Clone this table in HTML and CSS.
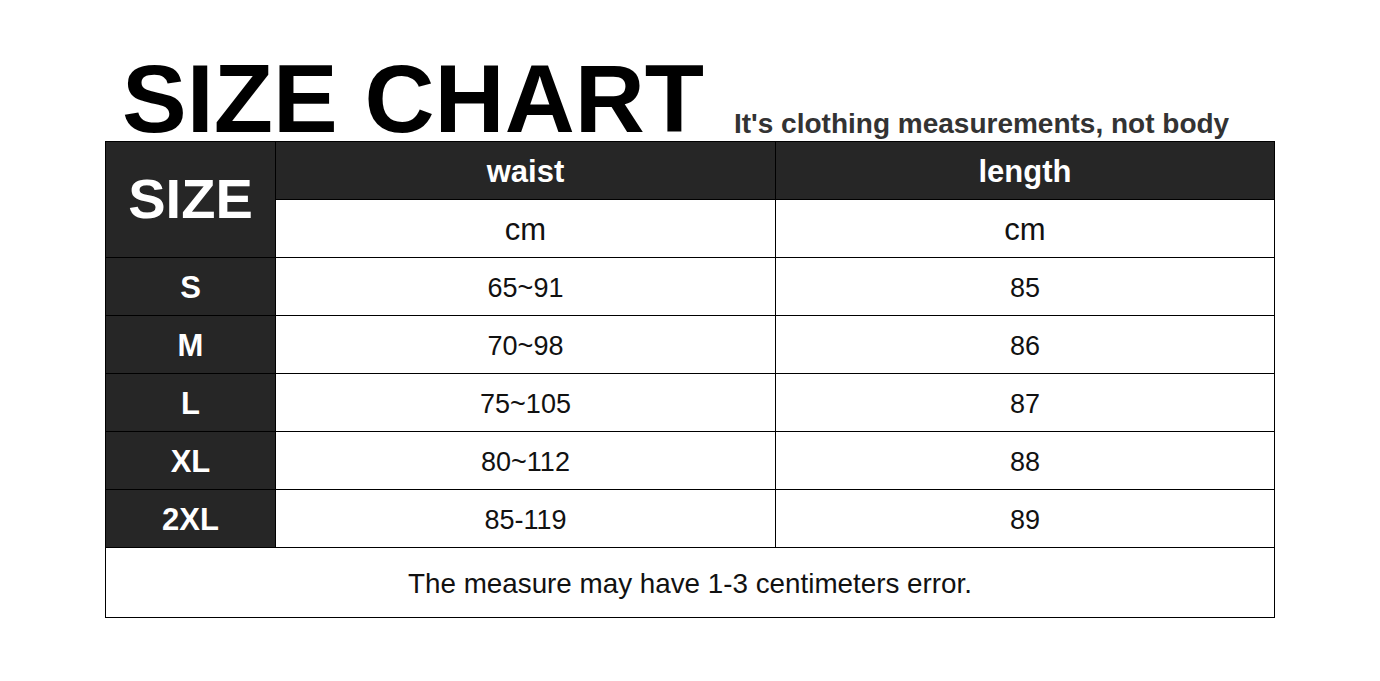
FILE: index.html
```html
<!DOCTYPE html>
<html lang="en">
<head>
<meta charset="utf-8">
<title>Size Chart</title>
<link rel="stylesheet" href="styles.css">
</head>
<body>
<div class="page">
  <header class="head">
    <h1 class="title">SIZE CHART</h1>
    <p class="subtitle">It's clothing measurements, not body</p>
  </header>
  <div class="chart">
    <div class="cell dark size-head">SIZE</div>
    <div class="cell dark col-head">waist</div>
    <div class="cell dark col-head">length</div>
    <div class="cell unit">cm</div>
    <div class="cell unit">cm</div>

    <div class="cell dark label">S</div>
    <div class="cell val">65~91</div>
    <div class="cell val">85</div>

    <div class="cell dark label">M</div>
    <div class="cell val">70~98</div>
    <div class="cell val">86</div>

    <div class="cell dark label">L</div>
    <div class="cell val">75~105</div>
    <div class="cell val">87</div>

    <div class="cell dark label">XL</div>
    <div class="cell val">80~112</div>
    <div class="cell val">88</div>

    <div class="cell dark label">2XL</div>
    <div class="cell val">85-119</div>
    <div class="cell val">89</div>

    <div class="cell note">The measure may have 1-3 centimeters error.</div>
  </div>
</div>
</body>
</html>
```
FILE: styles.css
```css
html, body {
  margin: 0;
  padding: 0;
  background: #ffffff;
}

body {
  font-family: "Liberation Sans", Arial, sans-serif;
  color: #000;
}

.page {
  padding: 50px 0 0 105px;
}

.head {
  display: flex;
  align-items: baseline;
  gap: 30px;
  height: 91px;
  padding-left: 17px;
}

.title {
  margin: 0;
  font-size: 97px;
  font-weight: 700;
  line-height: 1;
  color: #000;
}

.subtitle {
  margin: 0;
  font-size: 28px;
  font-weight: 700;
  line-height: 1;
  color: #333333;
  position: relative;
  top: 1px;
}

.chart {
  display: grid;
  grid-template-columns: 169px 499px 498px;
  grid-template-rows: repeat(7, 57px) 69px;
  gap: 1px;
  padding: 1px;
  width: 1168px;
  background: #000;
}

.cell {
  display: flex;
  align-items: center;
  justify-content: center;
  padding-top: 3px;
  background: #fff;
  color: #111;
}

.dark {
  background: #262626;
  color: #fff;
  font-weight: 700;
}

.size-head {
  grid-row: span 2;
  font-size: 56px;
  padding-top: 0;
  padding-bottom: 2px;
}

.col-head {
  font-size: 31px;
}

.unit {
  font-size: 31px;
}

.label {
  font-size: 31px;
}

.val {
  font-size: 27px;
}

.note {
  grid-column: span 3;
  font-size: 27.8px;
}
```
